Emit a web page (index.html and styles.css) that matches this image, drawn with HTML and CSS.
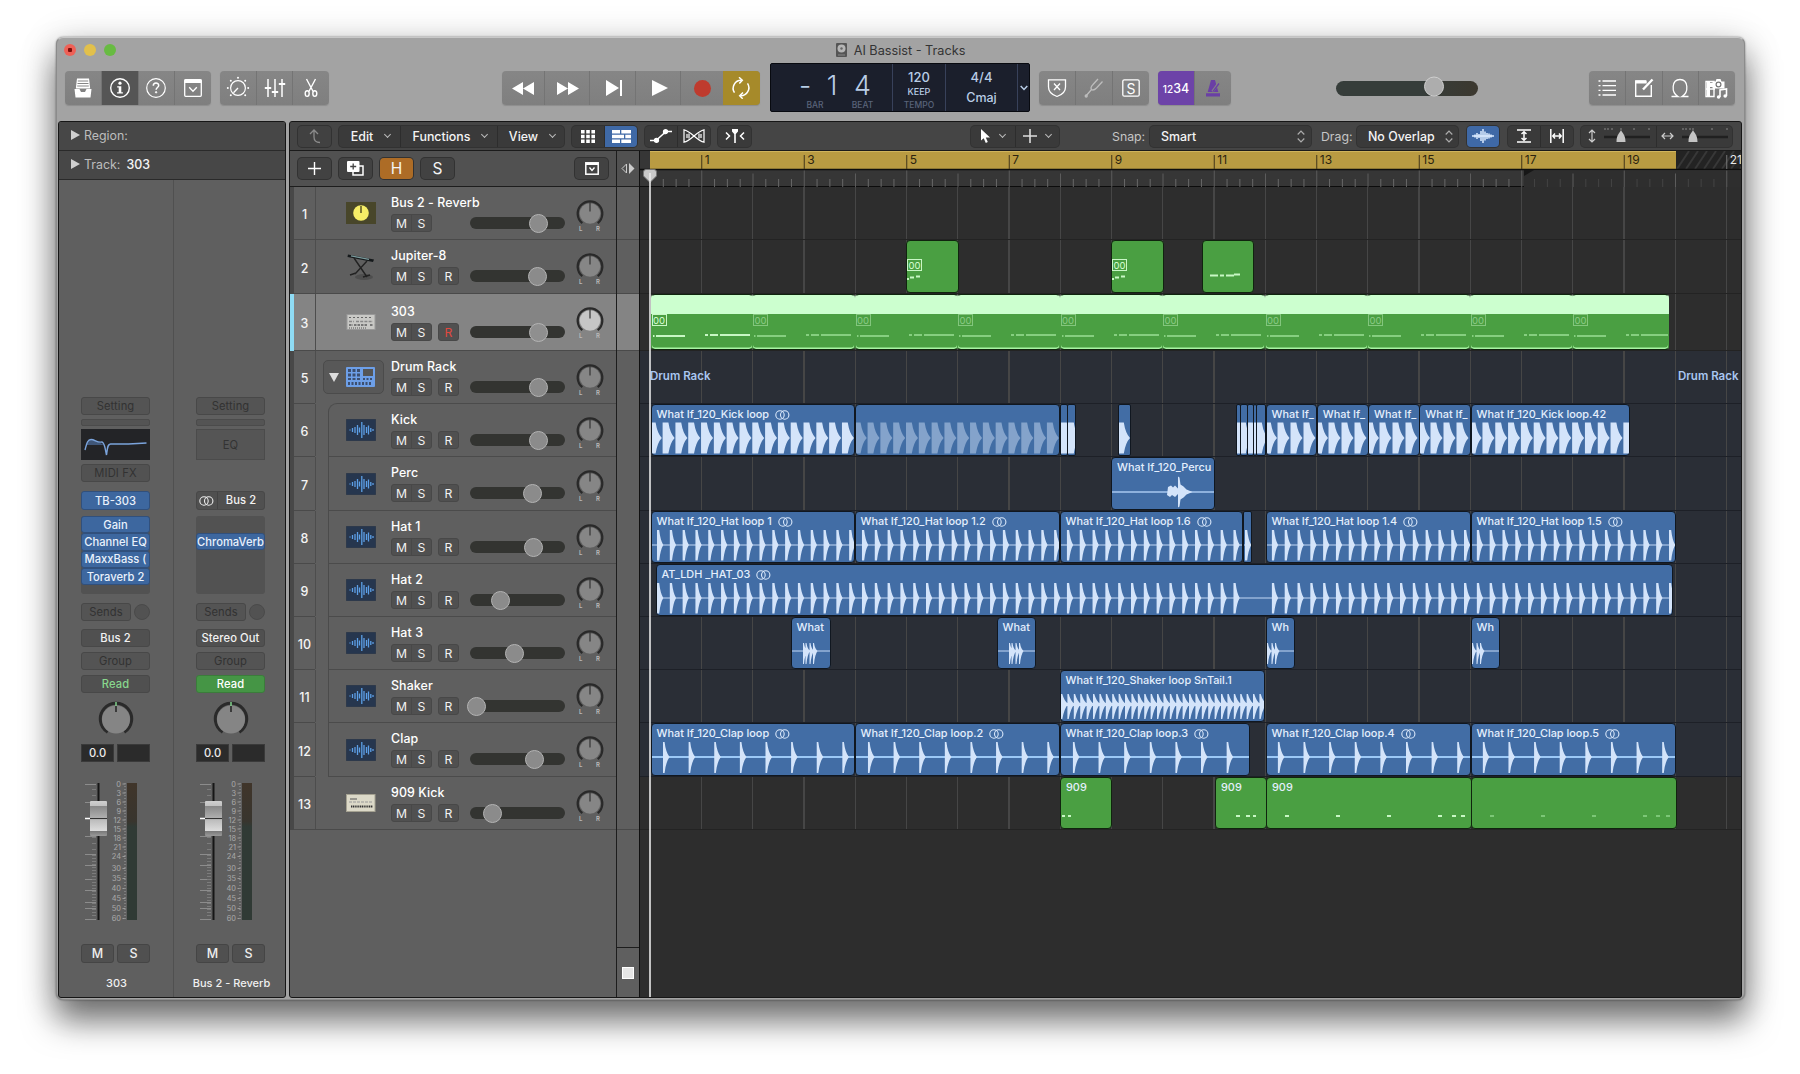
FILE: index.html
```html
<!DOCTYPE html>
<html lang="en">
<head>
<meta charset="utf-8">
<title>AI Bassist - Tracks</title>
<link rel="stylesheet" href="styles.css">
</head>
<body>
<div class="window">
  <header class="titlebar">
    <div class="lights"><i class="light close"></i><i class="light min"></i><i class="light max"></i></div>
    <div class="title">
      <svg width="11" height="14" viewBox="0 0 11 14"><rect width="11" height="14" rx="1" fill="#555"/><circle cx="5.5" cy="5.5" r="4" fill="#b5b5b5"/><circle cx="5.5" cy="5.5" r="1.2" fill="#666"/><path d="M2 12h7" stroke="#888"/></svg>
      <span>AI Bassist - Tracks</span>
    </div>
  </header>

  <div class="toolbar">
    <div class="group g-library">
      <span class="btn"><svg width="20" height="20" viewBox="0 0 20 20"><path d="M4 .5h12l1.200 10H2.800z" fill="#fff"/><path d="M4.800 3h10.400M4.500 5.500h11M4.200 8h11.600" stroke="#858585" stroke-width="1.100"/><path d="M1.500 11h5l1.500 3h4l1.500-3h5l-1 8.500h-15z" fill="#fff"/></svg></span>
      <span class="btn on"><svg width="22" height="22" viewBox="0 0 22 22"><circle cx="11" cy="11" r="9.300" fill="none" stroke="#fff" stroke-width="1.400"/><circle cx="11" cy="6.200" r="1.600" fill="#fff"/><path d="M8.200 9.200h4.100v6h1.600v1.300H8.100v-1.300h1.600v-4.700H8.200z" fill="#fff"/></svg></span>
      <span class="btn"><svg width="22" height="22" viewBox="0 0 22 22" fill="none" stroke="#fff"><circle cx="11" cy="11" r="9.300" stroke-width="1.200"/><path d="M8.300 8.700c0-3.600 5.400-3.500 5.400-.3 0 2-2.600 2.300-2.600 4.400" stroke-width="1.500"/><circle cx="11.100" cy="15.300" r=".7" fill="#fff"/></svg></span>
      <span class="btn"><svg width="20" height="20" viewBox="0 0 20 20" fill="none" stroke="#fff"><rect x="1.700" y="1.700" width="16.600" height="16.600" rx="1" stroke-width="1.300"/><path d="M1.500 1.500h17v3.600h-17z" fill="#fff" stroke="none"/><path d="M6.200 9.300l3.800 4 3.800-4" stroke-width="1.300"/></svg></span>
    </div>
    <div class="group g-edit">
      <span class="btn"><svg width="24" height="24" viewBox="0 0 24 24" fill="none" stroke="#fff"><circle cx="12" cy="12" r="7.400" stroke-width="1.200"/><path d="M12 12l-4.500 4.800" stroke-width="1.300"/><g fill="#fff" stroke="none"><circle cx="12" cy="1.800" r="1"/><circle cx="4.800" cy="4.800" r="1"/><circle cx="19.200" cy="4.800" r="1"/><circle cx="1.800" cy="12" r="1"/><circle cx="22.200" cy="12" r="1"/><circle cx="4.800" cy="19.200" r="1"/><circle cx="19.200" cy="19.200" r="1"/></g></svg></span>
      <span class="btn"><svg width="22" height="20" viewBox="0 0 22 20" stroke="#fff" stroke-width="1.500"><path d="M4 1v18M11 1v18M18 1v18"/><path d="M.8 10h6.400M7.800 14h6.400M14.800 6h6.400" stroke-width="2.200"/></svg></span>
      <span class="btn"><svg width="16" height="20" viewBox="0 0 16 20" fill="none" stroke="#fff" stroke-width="1.400"><path d="M3.500 1l6.600 12.500M12.500 1L5.900 13.500"/><ellipse cx="4.200" cy="15.600" rx="2" ry="2.800"/><ellipse cx="11.800" cy="15.600" rx="2" ry="2.800"/></svg></span>
    </div>
    <div class="group g-transport">
      <span class="btn"><svg width="22" height="13" viewBox="0 0 22 13" fill="#fff"><path d="M11 0v13L0 6.500zM22 0v13L11 6.500z"/></svg></span>
      <span class="btn nudge"><svg width="22" height="13" viewBox="0 0 22 13" fill="#fff"><path d="M0 0v13l11-6.500zM11 0v13l11-6.500z"/></svg></span>
      <span class="btn nudge"><svg width="16" height="16" viewBox="0 0 16 16" fill="#fff"><path d="M0 0v16l13-8zM14 0h2v16h-2z"/></svg></span>
      <span class="btn nudge"><svg width="16" height="16" viewBox="0 0 16 16" fill="#fff"><path d="M0 0v16l16-8z"/></svg></span>
      <span class="btn"><i class="rec"></i></span>
      <span class="btn cycle"><svg width="22" height="22" viewBox="0 0 22 22" fill="none" stroke="#fff" stroke-width="1.500"><path d="M4.500 15.700A8 8 0 0 1 11.500 3.300M17.500 6.300A8 8 0 0 1 10.500 18.700"/><path d="M9 .3l3.300 3-3 3.200M13 15.500l-3.300 3.200 3 3"/></svg></span>
    </div>
    <div class="lcd">
      <div class="lcd-pos"><b>-</b><b>1</b><b>4</b><small></small><small>BAR</small><small>BEAT</small></div>
      <div class="lcd-tempo"><b>120</b><em>KEEP</em><small>TEMPO</small></div>
      <div class="lcd-sig"><b>4/4</b><b>Cmaj</b></div>
      <div class="lcd-more"><svg width="8" height="6" viewBox="0 0 8 6" fill="none" stroke="#b9cde6" stroke-width="1.500"><path d="M.700 1L4 4.500 7.300 1"/></svg></div>
    </div>
    <div class="group g-mode">
      <span class="btn"><svg width="20" height="20" viewBox="0 0 20 20" fill="none" stroke="#fff" stroke-width="1.300"><path d="M1.500 1.800h17V9c0 5.500-4 8-8.500 9.500C5.500 17 1.500 14.500 1.500 9z"/><path d="M7 5.500l6 6.500M13 5.500L7 12"/></svg></span>
      <span class="btn"><svg width="20" height="20" viewBox="0 0 20 20" fill="none" stroke="#bdbdbd" stroke-width="1.300"><path d="M1.500 18.500l6-7M7.500 11.500c-1.500-2 0-3.500 1.500-5L14 1M7.500 11.500c2 1.500 3.500 0 5-1.500l6-6.500"/><circle cx="2.200" cy="18" r="1"/></svg></span>
      <span class="btn"><svg width="18" height="18" viewBox="0 0 18 18"><rect x=".8" y=".8" width="16.400" height="16.400" rx="1.500" fill="none" stroke="#fff" stroke-width="1.300"/></svg><span class="solo">S</span></span>
    </div>
    <div class="group g-count">
      <span class="btn purple"><sub>12</sub>34</span>
      <span class="btn"><svg width="16" height="18" viewBox="0 0 16 18"><path d="M6 1h4l3.300 12H2.700z" fill="#6a3fa5"/><path d="M1 14.300h14V17.500H1z" fill="#6a3fa5"/><path d="M7.500 12.500L14 3.500" stroke="#858585" stroke-width="2.500"/><path d="M8 12.500l6-8" stroke="#6a3fa5" stroke-width="1.300"/></svg></span>
    </div>
    <div class="volume"><i></i></div>
    <div class="group g-panels">
      <span class="btn"><svg width="18" height="16" viewBox="0 0 18 16" stroke="#fff" stroke-width="1.300"><path d="M4.500 1H18M4.500 5.600H18M4.500 10.300H18M4.500 15H18M.5 1h2M.5 5.600h2M.5 10.300h2M.5 15h2"/></svg></span>
      <span class="btn"><svg width="20" height="20" viewBox="0 0 20 20" fill="none" stroke="#fff"><path d="M12 3H1.700v15.300h15.600V7" stroke-width="1.400"/><path d="M1.700 4h11" stroke-width="3"/><path d="M9 11.500L18.500 1.500" stroke-width="2.400"/></svg></span>
      <span class="btn"><svg width="20" height="20" viewBox="0 0 20 20" fill="none" stroke="#fff" stroke-width="1.300"><path d="M1.500 18.500h6.500C1 14.500 1.500 1.500 10 1.500s9 13 2 17h6.500"/></svg></span>
      <span class="btn"><svg width="24" height="22" viewBox="0 0 24 22"><path d="M2 5h3v14H2zM5 6h4v4H5z" fill="#fff"/><path d="M1 4.500h8v15H1z" fill="none" stroke="#fff" stroke-width="1.400"/><path d="M1 12h9" stroke="#fff" stroke-width="1.400"/><path d="M7.500 4.500h3l1-2.500h4l1 2.500h3v7h-12z" fill="#fff"/><circle cx="13.500" cy="7.500" r="2.400" fill="#fff" stroke="#777" stroke-width="1.200"/><path d="M15 20v-7l6.500-1v7" fill="none" stroke="#fff" stroke-width="1.600"/><circle cx="13.600" cy="20" r="1.800" fill="#fff"/><circle cx="20.200" cy="19" r="1.800" fill="#fff"/></svg></span>
    </div>
  </div>

  <main class="panels">
    <aside class="inspector">
      <div class="insp-row"><i class="tri"></i>Region:</div>
      <div class="insp-row"><i class="tri"></i>Track: <b>303</b></div>
      <div class="strips" id="strips"></div>
    </aside>

    <section class="arrange">
      <div class="menubar">
        <div class="pill m-back"><span><svg width="12" height="15" viewBox="0 0 12 15" fill="none" stroke="#8b8b8b" stroke-width="1.300"><path d="M1 5l4-4 4 4M5 1v7c0 3.500 2 5.500 6 5.500"/></svg></span></div>
        <div class="pill m-menus"><span class="w1">Edit <i class="chev"></i></span><span class="w2">Functions <i class="chev"></i></span><span class="w3">View <i class="chev"></i></span></div>
        <div class="pill m-view"><span><svg width="14" height="13" viewBox="0 0 14 13" fill="#fff"><path d="M0 0h3.600v3.400H0zM5.200 0h3.600v3.400H5.200zM10.400 0H14v3.400h-3.600zM0 4.800h3.600v3.400H0zM5.200 4.800h3.600v3.400H5.200zM10.400 4.800H14v3.400h-3.600zM0 9.600h3.600V13H0zM5.200 9.600h3.600V13H5.200zM10.400 9.600H14V13h-3.600z"/></svg></span><span class="blue"><svg width="19" height="13" viewBox="0 0 19 13" fill="#fff"><path d="M0 0h8v3.400H0zM9.300 0H19v3.400H9.300zM0 4.800h12v3.400H0zM13.300 4.800H19v3.400h-5.700zM0 9.600h8V13H0zM9.300 9.600H19V13H9.300z"/></svg></span></div>
        <div class="pill m-auto"><span><svg width="22" height="14" viewBox="0 0 22 14" fill="none" stroke="#fff" stroke-width="1.500"><path d="M0 11.500h6L16 2.500h6"/><circle cx="6.500" cy="11.300" r="1.900" fill="#fff"/><circle cx="15.500" cy="2.700" r="1.900" fill="#fff"/></svg></span><span><svg width="22" height="14" viewBox="0 0 22 14" fill="none" stroke="#fff" stroke-width="1.200"><path d="M1 .800v12.400C8 12 14 2 21 .800v12.400C14 12 8 2 1 .800z"/><path d="M4 5v4M6 4.500v5M18 5v4M16 4.500v5"/></svg></span></div>
        <div class="pill m-catch"><span><svg width="20" height="14" viewBox="0 0 20 14" fill="none" stroke="#fff" stroke-width="1.500"><path d="M1 3.500L4.500 7 1 10.500M19 3.500L15.500 7l3.500 3.500"/><path d="M7 0h6v2.500L10.800 5v9H9.200V5L7 2.500z" fill="#fff" stroke="none"/></svg></span></div>
        <div class="pill m-tools"><span><svg width="10" height="14" viewBox="0 0 10 14" fill="#fff"><path d="M0 0v11.500l2.700-2.300L4.800 14l2-1-2-4.500H9z"/></svg><i class="chev"></i></span><span><svg width="14" height="14" viewBox="0 0 14 14" stroke="#ddd" stroke-width="1.600"><path d="M7 0v14M0 7h14"/></svg><i class="chev"></i></span></div>
        <label class="lb-snap">Snap:</label>
        <div class="pill m-snap"><span>Smart <svg width="8" height="13" viewBox="0 0 8 13" fill="none" stroke="#aaa" stroke-width="1.200"><path d="M.700 4.500L4 1l3.300 3.500M.700 8.500L4 12l3.300-3.500"/></svg></span></div>
        <label class="lb-drag">Drag:</label>
        <div class="pill m-drag"><span>No Overlap <svg width="8" height="13" viewBox="0 0 8 13" fill="none" stroke="#aaa" stroke-width="1.200"><path d="M.700 4.500L4 1l3.300 3.500M.700 8.500L4 12l3.300-3.500"/></svg></span></div>
        <div class="pill m-wave"><span class="blue"><svg width="22" height="14" viewBox="0 0 22 14" stroke="#dcebff" stroke-width="1.500"><path d="M0 7h22M3 5.500v3M5 4v6M7 5v4M9 2v10M11 0v14M13 2.500v9M15 4v6M17 4.500v5M19 5.500v3"/></svg></span></div>
        <div class="pill m-fit"><span><svg width="14" height="14" viewBox="0 0 14 14" fill="none" stroke="#fff" stroke-width="1.500"><path d="M0 1h14M0 13h14M7 3v8M4.500 5L7 2.800 9.500 5M4.500 9L7 11.200 9.500 9"/></svg></span><span><svg width="14" height="14" viewBox="0 0 14 14" fill="none" stroke="#fff" stroke-width="1.500"><path d="M.800 0v14M13.200 0v14M3 7h8M5 4.500L2.800 7 5 9.500M9 4.500L11.200 7 9 9.500"/></svg></span></div>
        <div class="pill m-zoom"><span><svg width="8" height="14" viewBox="0 0 8 14" fill="none" stroke="#ccc" stroke-width="1.200"><path d="M4 1v12M1 4l3-3 3 3M1 10l3 3 3-3"/></svg><svg width="46" height="16" viewBox="0 0 46 16"><path d="M0 9h46" stroke="#202020" stroke-width="2.500"/><path d="M1 0v2M4 0v2M8 0v2M17 0v2M30 0v2M45 0v2" stroke="#888"/><path d="M17 2c1 3 4.500 4 4.500 12h-9C12.500 6 16 5 17 2z" fill="#c4c4c4"/></svg></span><span><svg width="13" height="8" viewBox="0 0 13 8" fill="none" stroke="#ccc" stroke-width="1.200"><path d="M1 4h11M4 1L1 4l3 3M9 1l3 3-3 3"/></svg><svg width="46" height="16" viewBox="0 0 46 16"><path d="M0 9h46" stroke="#202020" stroke-width="2.500"/><path d="M1 0v2M4 0v2M8 0v2M11 0v2M30 0v2M45 0v2" stroke="#888"/><path d="M11 2c1 3 4.500 4 4.500 12h-9C6.500 6 10 5 11 2z" fill="#c4c4c4"/></svg></span></div>
      </div>

      <div class="work">
        <div class="headers">
          <div class="head-tools">
            <div class="pill"><span><svg width="13" height="13" viewBox="0 0 13 13" stroke="#fff" stroke-width="1.400"><path d="M6.500 0v13M0 6.500h13"/></svg></span></div>
            <div class="pill"><span><svg width="17" height="15" viewBox="0 0 17 15"><path d="M6 5h10v9H6z" fill="none" stroke="#fff" stroke-width="1.500"/><rect width="12.500" height="11" rx="1" fill="#fff"/><path d="M6.200 2.500v6M3.200 5.500h6" stroke="#444" stroke-width="1.300"/></svg></span></div>
            <div class="pill"><span class="orange">H</span></div>
            <div class="pill"><span class="big">S</span></div>
            <div class="pill last"><span><svg width="14" height="13" viewBox="0 0 14 13" fill="none" stroke="#fff"><rect x=".8" y=".8" width="12.400" height="11.400" stroke-width="1.500"/><path d="M1 2h12" stroke-width="2"/><path d="M4.500 5.500L7 8.500l2.500-3" stroke-width="1.300"/></svg></span></div>
            <div class="corner"><svg width="14" height="11" viewBox="0 0 14 11"><path d="M5.500 1v9L1 5.500z" fill="none" stroke="#ccc"/><path d="M8 0v11l5.500-5.500z" fill="#ccc"/></svg></div>
          </div>
          <div id="tracks"></div>
          <div class="head-rest"><div class="corner-col"><i></i></div></div>
        </div>
        <div class="timeline">
          <div class="ruler" id="ruler"></div>
          <div id="lanes"></div>
          <div class="playhead"><svg width="14" height="830" viewBox="0 0 14 830"><path d="M7 10v820" stroke="#f4f4f4" stroke-width="1.500"/><path d="M.5 3q0-2.500 2.500-2.500h8q2.500 0 2.500 2.500v4L7 13.500.5 7z" fill="#c9c9c9" stroke="#777"/><path d="M7 4v10" stroke="#fff"/></svg></div>
        </div>
      </div>
    </section>
  </main>
</div>
<script src="app.js"></script>
</body>
</html>
```
FILE: styles.css
```css
* { box-sizing: border-box; }
body { margin: 0; width: 1800px; height: 1074px; overflow: hidden; background: #fff; font-family: Inter, "Liberation Sans", sans-serif; font-size: 12px; color: #eee; padding: 37px 56px; }
svg { display: block; flex: none; }
b { font-weight: 500; }
i { font-style: normal; }
.window { width: 1689px; height: 963px; display: flex; flex-direction: column; background: #a3a3a3; border-radius: 7px; border: 1px solid #8b8b8b; border-top-color: #c8c8c8; box-shadow: 0 0 2px rgba(0,0,0,.5), 0 21px 33px rgba(0,0,0,.52), 0 4px 36px rgba(0,0,0,.18); }

/* title bar */
.titlebar { height: 25px; padding-bottom: 1px; display: grid; grid-template-columns: 264px 1fr 264px; align-items: center; }
.lights { display: flex; gap: 8px; padding-left: 7px; }
.light { width: 12px; height: 12px; border-radius: 50%; display: block; }
.close { background: radial-gradient(circle, #7c0d0a 0 2px, #ee6157 2.5px); }
.min { background: #e2c04b; }
.max { background: #68bb42; }
.title { display: flex; justify-content: center; align-items: center; gap: 7px; font-size: 12.7px; color: #343434; }

/* toolbar */
.toolbar { height: 58px; display: flex; align-items: flex-start; padding-left: 8px; }
.group { margin-top: 8px; height: 34px; display: flex; border-radius: 4px; background: linear-gradient(#868686, #7f7f7f); overflow: hidden; box-shadow: 0 1px 1px #8d8d8d; }
.btn { flex: 1; display: grid; place-items: center; border-left: 1px solid #747474; }
.btn > * { grid-area: 1 / 1; }
.btn:first-child { border-left: 0; }
.btn.on { background: #555; }
.btn.nudge { padding-left: 3px; }
.g-library { width: 146px; }
.g-edit { width: 109px; margin-left: 9px; }
.g-transport { width: 258px; margin-left: 173px; }
.g-transport .btn.cycle { background: #a68a2a; flex: 0 0 37px; border-left: 0; }
.rec { width: 17px; height: 17px; border-radius: 50%; background: #bf3b2e; }
.solo { font-size: 14px; color: #fff; }
.g-mode { width: 110px; margin-left: 9px; }
.g-count { width: 73px; margin-left: 9px; }
.btn.purple { display: flex; align-items: center; justify-content: center; background: #6d43a8; font-size: 12.5px; font-weight: 500; color: #fff; }
.purple sub { font-size: 10px; vertical-align: baseline; padding-top: 2px; }
.volume { width: 142px; height: 15px; margin: 18px 0 0 105px; border-radius: 8px; background: linear-gradient(90deg, #363d3a 60%, #3c382f); padding-left: 88px; }
.volume i { display: block; width: 20px; height: 20px; margin-top: -2.5px; border-radius: 50%; background: #adadad; border: 1px solid #cfcfcf; transform: translateY(-2.500px); }
.volume { display: flex; align-items: flex-start; }
.g-panels { width: 146px; margin-left: 111px; }
.lcd { width: 260px; height: 49px; margin-left: 10px; background: #1b1f2c; border: 1px solid #080a10; border-radius: 2px; display: flex; color: #b9cde6; }
.lcd small { font-size: 8.5px; color: #59637a; font-weight: 500; }
.lcd-pos { width: 121px; display: grid; grid-template-columns: 26px 28px 33px; grid-template-rows: 30px 12px; padding: 5px 0 0 21px; text-align: center; }
.lcd-pos b { font-size: 27px; font-weight: 300; line-height: 34px; }
.lcd-pos small { line-height: 13px; margin: 0 17px 0 -17px; }
.lcd-pos small:last-child { margin: 0; }
.lcd-tempo, .lcd-sig { border-left: 1px solid #38415a; text-align: center; display: flex; flex-direction: column; }
.lcd-tempo { width: 53px; padding-top: 5px; }
.lcd-sig { width: 72px; padding-top: 5px; }
.lcd-tempo b, .lcd-sig b { font-size: 13px; line-height: 17px; }
.lcd-sig b + b { margin-top: 3px; font-size: 12.5px; }
.lcd-tempo em { font-style: normal; font-size: 9px; line-height: 12px; font-weight: 500; }
.lcd-tempo small { line-height: 14px; }
.lcd-more { flex: 1; display: grid; place-items: center; border-left: 1px solid #38415a; }

/* panels */
.panels { height: 877px; margin: 0 2px 0 1px; display: flex; gap: 3px; }
.inspector { width: 228px; border: 1px solid #161616; border-radius: 3px; background: #5f5f5f; overflow: hidden; }
.insp-row { height: 29px; display: flex; align-items: center; gap: 6px; padding: 0 0 2px 12px; background: #474747; border-bottom: 1px solid #2a2a2a; color: #bdbdbd; font-size: 12.4px; }
.insp-row b { color: #f4f4f4; }
.tri { border-left: 9px solid #d0d0d0; border-top: 5.5px solid transparent; border-bottom: 5.5px solid transparent; margin-right: -2px; }
.strips { display: flex; height: 818px; }
.strip { width: 115px; padding: 217px 0 0 22px; border-right: 1px solid #505050; font-size: 11.2px; }
.strip:last-child { border: 0; }
.strip > * { width: 69px; }
.slot { height: 18px; border-radius: 3px; background: #545454; border: 1px solid #484848; display: flex; align-items: center; justify-content: center; color: #323232; white-space: nowrap; letter-spacing: .1px; }
.slot.lit { color: #f2f2f2; font-weight: 500; background: #505050; }
.slot.blue { background: #3d679f; border-color: #31507c; color: #e9f1fc; font-weight: 500; letter-spacing: 0; }
.slot.green { background: #459545; border-color: #3b7c3b; color: #fff; font-weight: 500; }
.slot.greentext { color: #88d78d; font-weight: 500; background: #505050; }
.thin { height: 7px; margin: 4px 0 3px; background: #545454; border: 1px solid #4b4b4b; border-radius: 2px; }
.eq { height: 31px; background: #232427; margin-bottom: 4px; }
.eq.off { background: #555; border: 1px solid #4b4b4b; color: #333; display: grid; place-items: center; }
.midifx { background: #525252; }
.midifx.none { visibility: hidden; }
.inst { margin-top: 9px; height: 19px; }
.bus-in { padding: 0; justify-content: flex-start; }
.bus-in svg { margin: 0 3px 0 2px; }
.bus-in span { flex: 1; text-align: center; border-left: 1px solid #444; line-height: 17px; }
.inserts { margin-top: 6px; height: 78px; background: #525252; border-radius: 3px; }
.inserts .slot { height: 17.3px; }
.inserts.pad { padding-top: 17px; }
.sends { margin-top: 9px; display: flex; gap: 3px; align-items: center; }
.sends .slot { flex: 1; }
.sends i { width: 16px; height: 16px; border-radius: 50%; background: #525252; border: 1px solid #4a4a4a; }
.out { margin-top: 8px; }
.grp { margin: 5px 0; }
.dial { height: 50px; display: flex; justify-content: center; padding-top: 8px; }
.readout { display: flex; gap: 3px; margin-top: 1px; }
.readout span { flex: 1; height: 18px; background: #2b2b2b; color: #eee; font-weight: 500; text-align: center; border: 1px solid #3a3a3a; line-height: 16px; }
.fader { margin: 16px 0 19px; height: 147px; }
.fader text { font-family: Inter, "Liberation Sans", sans-serif; font-size: 7.4px; fill: #aaa; text-anchor: end; }
.ms { display: flex; gap: 3px; }
.ms span { flex: 1; height: 19px; border-radius: 3px; background: #505050; border: 1px solid #454545; text-align: center; line-height: 18px; color: #eee; font-size: 12.5px; font-weight: 500; }
.strip > .sname { margin: 11px 0 0 -22px; width: 115px; text-align: center; line-height: 18px; color: #f0f0f0; font-weight: 500; font-size: 11px; }

/* arrange area */
.arrange { width: 1453px; border: 1px solid #161616; border-radius: 3px; overflow: hidden; background: #2d2d2d; display: flex; flex-direction: column; }
.menubar { height: 29px; flex: none; background: #454545; border-bottom: 1px solid #1b1b1b; display: flex; align-items: center; padding-left: 8px; }
.pill { height: 21px; display: flex; border-radius: 4px; background: #3a3a3a; box-shadow: 0 0 0 1px #323232; overflow: hidden; flex: none; }
.pill span { flex: 1; display: flex; align-items: center; justify-content: center; color: #f4f4f4; border-left: 1px solid #2d2d2d; white-space: nowrap; font-size: 12.4px; font-weight: 500; }
.pill span:first-child { border-left: 0; }
.pill .blue { background: #3f69a6; }
.chev { width: 5px; height: 5px; border: solid #bbb; border-width: 0 1.2px 1.2px 0; transform: rotate(45deg); margin: -3px 0 0 12px; }
.m-back { width: 33px; background: #414141; }
.m-menus { width: 225px; margin-left: 8px; }
.m-menus .w1 { flex: 0 0 61px; }
.m-menus .w2 { flex: 0 0 97px; }
.m-menus span { padding-left: 2px; }
.m-view { width: 65px; margin-left: 8px; }
.m-auto { width: 65px; margin-left: 8px; }
.m-catch { width: 33px; margin-left: 8px; }
.m-tools { width: 88px; margin-left: 220px; }
.m-tools .chev { margin-left: 9px; }
.menubar label { font-size: 12.3px; color: #c6c6c6; flex: none; }
.lb-snap { width: 38px; margin-left: 53px; }
.m-snap { width: 161px; }
.m-snap span { justify-content: space-between; padding: 0 6px 0 11px; }
.lb-drag { width: 36px; margin-left: 10px; }
.m-drag { width: 101px; }
.m-drag span { justify-content: space-between; padding: 0 5px 0 11px; }
.m-wave { width: 32px; margin-left: 9px; }
.m-fit { width: 65px; margin-left: 9px; }
.m-zoom { width: 151px; margin-left: 8px; }
.m-zoom span { gap: 8px; }
.work { flex: 1; display: flex; }
.headers { width: 350px; border-right: 1px solid #111; background: #5f5f5f; display: flex; flex-direction: column; }
.head-tools { height: 36px; background: #515151; border-bottom: 1px solid #1d1d1d; display: flex; align-items: center; gap: 8px; padding-left: 8px; }
.head-tools .pill { width: 33px; background: #424242; }
.head-tools .pill span { font-size: 15.5px; font-weight: 400; }
.pill .orange { background: #ad6c26; }
.head-tools .last { margin-left: auto; }
.corner { width: 23px; height: 36px; border-left: 1px solid #1d1d1d; display: grid; place-items: center; }
.track { display: flex; border-bottom: 1px solid #4a4a4a; }
.track .edge { width: 4px; background: #484848; margin-bottom: -1px; }
.track .num { width: 22px; border-right: 1px solid #4d4d4d; display: grid; place-items: center; font-size: 12.5px; font-weight: 500; color: #f4f4f4; padding-top: 3px; }
.track .tbody { flex: 1; display: flex; padding-left: 30px; }
.track .tbody.rack { padding-left: 7px; }
.track.child { border-bottom-color: transparent; background: linear-gradient(#4a4a4a, #4a4a4a) 0 100% / 25px 1px no-repeat; background-origin: border-box; }
.track.child .tbody { margin: 0 0 -1px 12px; padding-left: 17px; border-left: 1px solid #4b4b4b; border-bottom: 1px solid #4b4b4b; }
.track.first .tbody { border-top: 1px solid #4b4b4b; border-top-left-radius: 9px; margin-top: -1px; }
.track.prefirst { border-bottom-color: transparent; background: linear-gradient(#4a4a4a, #4a4a4a) 0 100% / 25px 1px no-repeat; background-origin: border-box; }
.track.selected { background: #848484; }
.track.selected .edge { background: #8fdcf5; }
.pic { width: 30px; display: flex; align-items: center; }
.rackbox { width: 61px; height: 34px; margin: 9px 0 0; display: flex; align-items: center; gap: 7px; padding-left: 5px; border-radius: 5px; background: #585858; border: 1px solid #4b4b4b; }
.down { border-top: 9px solid #ddd; border-left: 5.5px solid transparent; border-right: 5.5px solid transparent; }
.info { width: 174px; margin-left: 15px; padding-top: 7px; }
.rackbox + .info { margin-left: 7px; }
.tname { font-size: 12.4px; line-height: 18px; font-weight: 500; color: #fff; white-space: nowrap; letter-spacing: .1px; }
.controls { display: flex; align-items: center; height: 18px; margin-top: 2px; }
.mini { display: flex; width: 41px; height: 18px; border: 1px solid #484848; border-radius: 3px; background: #505050; overflow: hidden; }
.mini span { flex: 1; text-align: center; line-height: 17px; font-size: 12.2px; color: #f2f2f2; }
.mini span + span { border-left: 1px solid #484848; }
.mini.one { width: 21px; margin-left: 6px; }
.mini.red span { color: #e0493f; }
.hslider { width: 95px; height: 12px; margin-left: auto; border-radius: 6px; background: #333431; }
.hslider i { display: block; width: 19px; height: 19px; margin-top: -3.5px; border-radius: 50%; background: #8b8b8b; border: 1px solid #b4b4b4; }
.selected .hslider i { background: #8f8f8f; }
.pan { width: 28px; margin: 12px 11px 0 11px; }
.pan text { font-family: Inter, "Liberation Sans", sans-serif; font-size: 6px; fill: #bbb; font-weight: 600; }
.vline { width: 23px; border-left: 1px solid #1d1d1d; margin-bottom: -1px; }
.head-rest { flex: 1; display: flex; justify-content: flex-end; }
.corner-col { width: 23px; border-left: 1px solid #1d1d1d; display: flex; flex-direction: column; justify-content: flex-end; align-items: center; }
.corner-col::before { content: ""; margin-top: auto; margin-bottom: 19px; width: 100%; border-top: 1px solid #1d1d1d; }
.corner-col i { width: 12px; height: 12px; background: #e6e6e6; border: 1px solid #fff; margin-bottom: 18px; flex: none; }

/* timeline */
.timeline { flex: 1; position: relative; overflow: hidden; background: #2d2d2d; }
.ruler { height: 36px; background: #363636; border-bottom: 1px solid #0c0c0c; }
.ruler text { font-family: Inter, "Liberation Sans", sans-serif; font-size: 12px; fill: #2c2410; }
.ruler text.out { fill: #e6e6e6; }
.lane { position: relative; border-bottom: 1px solid #232323; background: repeating-linear-gradient(90deg, #464646 0 1px, transparent 1px 51.25px) 61px 0 no-repeat #2d2d2d; }
.lane.drum { background-color: #2a2e36; border-bottom-color: #1d2027; }
.playhead { position: absolute; left: 3px; top: 18px; }
.region { position: absolute; top: 0; bottom: 0; border-radius: 4px; border: 1px solid #101720; background: #426da5; overflow: hidden; }
.region.green { background: #4a9f42; border-color: #10240e; }
.region svg { position: absolute; left: 0; top: 0; }
.region .rn { position: absolute; left: 5px; top: 1px; display: flex; align-items: center; gap: 6px; font-size: 10.9px; line-height: 17px; font-weight: 500; color: #e4effd; white-space: nowrap; }
.region .rn svg { position: static; }
.region.tiny { border-radius: 2px; }
.region.sel { border-radius: 4px; border-color: #0f260d; background: linear-gradient(#ccffcf 0 19px, #4a9f42 19px); box-shadow: inset 0 -1.5px #a8f5a4; border-left-color: transparent; border-right-color: transparent; }
.loopbox { position: absolute; left: 0; width: 15px; height: 12px; font-size: 9.5px; line-height: 11px; border: 1px solid #c9f7c6; color: #d9ffd6; text-align: center; }
.ghost { opacity: .45; }
.racklabel { position: absolute; top: 17px; font-size: 11.5px; line-height: 17px; font-weight: 600; color: #a9c6f0; white-space: nowrap; }
```
FILE: app.js
```js
const FIRST = 640;      // window x of the timeline's left edge
const BAR0 = 650;       // window x of bar zero
const BAR = 51.25;
const px = n => +n.toFixed(2);

const STEREO = c => `<svg width="15" height="10" viewBox="0 0 15 10" fill="none" stroke="${c}" stroke-width="1.1"><circle cx="5" cy="5" r="4.2"/><circle cx="9.7" cy="5" r="4.2"/></svg>`;

const WAVE_PIC = `<svg width="30" height="22" viewBox="0 0 30 22"><rect width="30" height="22" rx="1" fill="#26364e" stroke="#343c48"/><path d="M4 10.5v1M6.500 9v4M9 8v6M11.500 6v10M13.500 8.500v5M15.800 3v16M18 6v10M20.500 8v6M22.500 6.500v9M24.800 9v4M27 10v2" stroke="#5c9fe6" stroke-width="1.3"/></svg>`;
const PICS = {
  wave: WAVE_PIC,
  knob: `<svg width="30" height="22" viewBox="0 0 30 22"><rect width="30" height="22" fill="#48462a"/><circle cx="15" cy="11" r="7.8" fill="#f6ee67"/><path d="M15 4v7" stroke="#3d3a1a" stroke-width="1.3"/></svg>`,
  keys: `<svg width="30" height="28" viewBox="0 0 30 28"><ellipse cx="18" cy="24" rx="9" ry="3" fill="#4e4e4e"/><path d="M2 1.500L28 6.500l-1 2.500L1.500 4z" fill="#15191b"/><path d="M5 2.800l18 3.600" stroke="#7b9a9c" stroke-width="1.2"/><path d="M8 5l13 19M21 8L9 21M4 22l6-2M17 24l7-2" stroke="#222" stroke-width="1.4" fill="none"/></svg>`,
  tb: `<svg width="30" height="16" viewBox="0 0 30 16"><rect x="1" y=".5" width="28" height="15" fill="#c9c9c6" stroke="#999"/><path d="M3 3.500h24" stroke="#666" stroke-dasharray="2 2"/><path d="M3 7.500h5M10 7.500h17" stroke="#888" stroke-width="1.500" stroke-dasharray="3 1.200"/><path d="M3 11h4M8 11h14M24 11h3" stroke="#777" stroke-width="2" stroke-dasharray="2.500 1"/><path d="M3 14h18" stroke="#555" stroke-dasharray="1 1"/></svg>`,
  rack: `<svg width="30" height="20" viewBox="0 0 30 20"><rect width="29" height="20" rx="1" fill="#6d9fe8"/><path d="M17 2h10v7H17z" fill="#555"/><g fill="#3c4f70"><path d="M2 2h3v3H2zM6.500 2h3v3h-3zM11 2h3v3h-3zM2 6.500h3v3H2zM6.500 6.500h3v3h-3zM11 6.500h3v3h-3zM2 11h3v2H2zM6.500 11h3v2h-3zM11 11h3v2h-3zM17 11h2v2h-2zM20.500 11h2v2h-2zM24 11h2v2h-2zM2 15h2v3H2zM5.500 15h2v3h-2zM9 15h2v3H9zM12.500 15h2v3h-2zM16 15h2v3h-2zM19.500 15h2v3h-2zM23 15h2v3h-2z"/></g></svg>`,
  tr: `<svg width="30" height="18" viewBox="0 0 30 18"><rect x=".5" y=".5" width="28.500" height="17" fill="#dcd9c8" stroke="#a5a292"/><path d="M4 5h7" stroke="#555"/><path d="M3 8h24" stroke="#999" stroke-dasharray="3 1"/><path d="M5 12.500h22" stroke="#333" stroke-width="1.800" stroke-dasharray="1.200 .6"/></svg>`
};

/* name, number, row height, picture, volume knob x, extra */
const tracks = [
  ["Bus 2 - Reverb", 1, 53, "knob", 539, { noRec: 1 }],
  ["Jupiter-8", 2, 54, "keys", 538.5, {}],
  ["303", 3, 57, "tb", 539, { sel: 1 }],
  ["Drum Rack", 5, 53, "rack", 539, { rack: 1, drum: 1, cls: "prefirst" }],
  ["Kick", 6, 53, "wave", 539, { drum: 1, cls: "child first" }],
  ["Perc", 7, 54, "wave", 533, { drum: 1, cls: "child" }],
  ["Hat 1", 8, 53, "wave", 534.5, { drum: 1, cls: "child" }],
  ["Hat 2", 9, 53, "wave", 501, { drum: 1, cls: "child" }],
  ["Hat 3", 10, 53, "wave", 515, { drum: 1, cls: "child" }],
  ["Shaker", 11, 53, "wave", 477, { drum: 1, cls: "child" }],
  ["Clap", 12, 54, "wave", 535, { drum: 1, cls: "child" }],
  ["909 Kick", 13, 53, "tr", 493, {}]
];

const pan = sel => `<svg class="pan" width="28" height="34" viewBox="0 0 28 34"><path d="M6.300 24.200A12.300 12.300 0 1 1 21.700 24.200" fill="none" stroke="#292929" stroke-width="2.3"/><circle cx="14" cy="14.5" r="10.3" fill="${sel ? "#c6c6c6" : "#868686"}"/><path d="M14 3v9.500" stroke="#333" stroke-width="1.2"/><text x="3" y="32">L</text><text x="20" y="32">R</text></svg>`;

document.getElementById("tracks").innerHTML = tracks.map(([name, num, h, pic, vol, o]) => `
  <div class="track ${o.cls || ""} ${o.sel ? "selected" : ""}" style="height:${h}px">
    <div class="edge"></div><div class="num">${num}</div>
    <div class="tbody ${o.rack ? "rack" : ""}">
      ${o.rack ? `<div class="rackbox"><i class="down"></i>${PICS.rack}</div>` : `<div class="pic">${PICS[pic]}</div>`}
      <div class="info" ${o.sel ? 'style="padding-top:9px"' : ""}>
        <div class="tname">${name}</div>
        <div class="controls"><div class="mini"><span>M</span><span>S</span></div>${o.noRec ? "" : `<div class="mini one ${o.sel ? "red" : ""}"><span>R</span></div>`}
        <div class="hslider"><i style="margin-left:${vol - 471 - 9.5}px"></i></div></div>
      </div>
      ${pan(o.sel)}
    </div>
    <div class="vline"></div>
  </div>`).join("");

/* ---- waveforms ---- */
const C = 33;
function pulse(kind, p) {
  const f = (w, mid, end, up, dn) =>
    `M${px(p)} ${C - up}h${w}Q${px(p + mid)} ${C - up * .3} ${px(p + end)} ${C}Q${px(p + mid)} ${C + dn * .3} ${px(p + w)} ${C + dn}H${px(p)}z`;
  if (kind === "kick") return f(5.8, 7.5, 12, 15.5, 15.5);
  if (kind === "hat") return f(2.2, 3.4, 6.3, 15, 15.5);
  if (kind === "clap") return f(1.6, 2.8, 6.6, 15, 16);
  if (kind === "shaker") return f(1.3, 3.2, 7.2, 10, 15);
  return f(1, 1.8, 4.5, 8, 13);
}
const PERIOD = { kick: 12.81, hat: 12.81, clap: 25.62, shaker: 6.4 };
const START = { kick: 648.8, hat: 656, clap: 662, shaker: 1060 };
function wave(kind, x, w, opt) {
  let d = "";
  if (opt.at) opt.at.forEach(p => d += pulse(kind, p - x));
  else for (let p = START[kind]; p < x + w; p += PERIOD[kind])
    if (p > x - PERIOD[kind] && !(opt.gap && p > opt.gap[0] && p < opt.gap[1])) d += pulse(kind, p - x);
  const line = kind === "clap"
    ? `<path d="M0 ${C}H${w}" stroke="#9cc9f7" stroke-width="2"/>`
    : `<path d="M0 ${C}H${w}" stroke="#c3d9f5" stroke-width="1"/>`;
  return `<svg width="${w}" height="51" ${opt.ghost ? 'class="ghost"' : ""}>${kind === "kick" ? "" : line}<path d="${d}" fill="#d4e4fa"/></svg>`;
}
const audio = (kind, a, b, name, o = {}) => {
  const w = px(b - a);
  return `<div class="region ${w < 20 ? "tiny" : ""}" style="left:${px(a - FIRST - .5)}px;width:${w}px">${o.raw || wave(kind, a, w, o)}${name ? `<div class="rn">${name}${o.st ? STEREO("#dbe9fb") : ""}</div>` : ""}</div>`;
};
const dash = list => list.map(([x, y, w, c]) => `<path d="M${x} ${y}h${w}" stroke="${c || "#c8f7c4"}" stroke-width="2"/>`).join("");
const midi = (a, b, name, notes, top) =>
  `<div class="region green" style="left:${px(a - FIRST)}px;width:${px(b - a)}px"><svg width="${px(b - a)}" height="51">${dash(notes)}</svg>${name ? `<div class="rn">${name}</div>` : ""}${top ? `<div class="loopbox" style="top:${top}px">00</div>` : ""}</div>`;

const S = { st: 1 };
const lanes = {
  2: midi(906, 958.5, "", [[0, 38, 2], [3, 36.5, 4], [9, 35.5, 4]], 18) + midi(1111, 1164, "", [[0, 38, 2], [3, 36.5, 4], [9, 35.5, 4]], 18) +
     midi(1201.5, 1253.5, "", [[7, 34.5, 8], [17, 34.5, 4], [23, 34.5, 8], [31, 33.5, 6]]),
  5: `<div class="racklabel" style="left:10px">Drum Rack</div><div class="racklabel" style="left:1038px">Drum Rack</div>`,
  6: audio("kick", 651, 855.5, "What If_120_Kick loop", S) + audio("kick", 855, 1060.5, "", { ghost: 1 }) +
     audio("kick", 1060, 1068, "", { at: [1060] }) + audio("kick", 1067, 1076, "", { at: [1067] }) + audio("kick", 1118, 1131, "", { at: [1117] }) +
     [[1236.5, 1241], [1240, 1248], [1247, 1254], [1253, 1257], [1256, 1266]].map(([a, b]) => audio("kick", a, b, "", { at: [a - 1] })).join("") +
     [0, 1, 2, 3].map(i => audio("kick", 1266 + i * BAR, 1266.5 + (i + 1) * BAR, "What If_", { at: [-2, 10.5, 23.5, 36.5].map(p => 1266 + i * BAR + p) })).join("") +
     audio("kick", 1471, 1630, "What If_120_Kick loop.42"),
  7: audio("x", 1111.5, 1215.5, "What If_120_Percu", { raw: `<svg width="104" height="51"><path d="M0 34H104" stroke="#a9c8f0" stroke-width="1.5"/><path d="M56 29l3-1.500 2 2 2-2 3 3v-12l1.500 1 1 7 3 2 3 3 6 2.500-6 2.500-3 3-3 2-1 7-1.500 1V36l-3 3-3-2-2 2-3-2z" fill="#d4e4fa"/></svg>` }),
  8: audio("hat", 651, 855.5, "What If_120_Hat loop 1", S) + audio("hat", 855, 1060.5, "What If_120_Hat loop 1.2", S) + audio("hat", 1060, 1243, "What If_120_Hat loop 1.6", S) +
     audio("hat", 1243, 1252.5, "", { at: [1244] }) + audio("hat", 1266, 1471.5, "What If_120_Hat loop 1.4", S) + audio("hat", 1471, 1676.5, "What If_120_Hat loop 1.5", S),
  9: audio("hat", 656, 1673, "AT_LDH _HAT_03", { st: 1, gap: [1238, 1268] }),
  10: audio("h3", 791, 831, "What", { at: [802, 804.5, 808.5, 812] }) + audio("h3", 997, 1036, "What", { at: [1008, 1010.5, 1014.5, 1018] }) +
      audio("h3", 1266, 1295, "Wh", { at: [1266, 1270.5, 1274] }) + audio("h3", 1471, 1500.5, "Wh", { at: [1471, 1475.5, 1479] }),
  11: audio("shaker", 1060, 1265.5, "What If_120_Shaker loop SnTail.1"),
  12: audio("clap", 651, 855.5, "What If_120_Clap loop", S) + audio("clap", 855, 1060.5, "What If_120_Clap loop.2", S) + audio("clap", 1060, 1250.5, "What If_120_Clap loop.3", S) +
      audio("clap", 1266, 1471.5, "What If_120_Clap loop.4", S) + audio("clap", 1471, 1676.5, "What If_120_Clap loop.5", S),
  13: midi(1060, 1112, "909", [[1, 38, 3], [7, 38, 3]]) + midi(1215, 1266.5, "909", [[20, 38, 4], [30, 38, 4], [37, 38, 3]]) +
      midi(1266, 1471.5, "909", [[18, 38, 4], [69, 38, 4], [120, 38, 4], [171, 38, 4], [185, 38, 4], [194, 38, 4]]) +
      midi(1471, 1676.5, "", [18, 69, 120, 171, 184, 194].map(x => [x, 38, 4, "#7cc777"]))
};
let loops = "";
for (let i = 0; i < 10; i++) {
  const a = i ? BAR0 + i * 102.5 : 651, b = i === 9 ? 1669.5 : BAR0 + (i + 1) * 102.5 + .5;
  const c = i ? "#86cf80" : "#c8f7c4";
  loops += `<div class="region sel" style="left:${px(a - FIRST - .5)}px;width:${px(b - a)}px"><svg width="103" height="54">${dash([[1, 41, 1.5, c], [4, 41, 29, c], [53, 40, 3, c], [58, 40, 8, c], [68, 40, 30, c]])}</svg><div class="loopbox ${i ? "ghost" : ""}" style="top:19px">00</div></div>`;
}
lanes[3] = loops;

document.getElementById("lanes").innerHTML = tracks.map(([, num, h, , , o]) =>
  `<div class="lane ${o.drum ? "drum" : ""}" style="height:${h}px">${lanes[num] || ""}</div>`).join("");

/* ---- ruler ---- */
let r = `<rect x="10" y="0" width="1026" height="18" fill="#b99b42"/><rect x="1036" y="0" width="66" height="18" fill="#232323"/>`;
for (let x = 1037; x < 1102; x += 9) r += `<path d="M${x} 18l12-18" stroke="#383838" stroke-width="2"/>`;
r += `<path d="M10 .5H1036" stroke="#d0b45c"/><path d="M0 18.5H1102" stroke="#0e0e0e" stroke-width="1.5"/><rect x="884" y="19.5" width="218" height="17" fill="#2e2e2e"/><path d="M884 19h10l-10 6z" fill="#171717"/>`;
for (let i = 1; i <= 84; i++) {
  const x = px(BAR0 - FIRST + i * BAR / 4 + .5);
  const dim = i >= 68 ? "#444" : "#686868";
  const top = i % 8 === 4 ? 19.5 : i % 4 === 0 ? 22.5 : 28;
  r += `<path d="M${x} ${top}V36" stroke="${i % 4 ? dim : "#5c5c5c"}"/>`;
  if (i % 8 === 4) r += `<path d="M${x} 4V18" stroke="${i < 82 ? "#40351a" : "#777"}"/><text class="${i > 82 ? "out" : ""}" x="${x + 3}" y="12.5">${i / 4}</text>`;
}
document.getElementById("ruler").innerHTML = `<svg width="1102" height="36">${r}</svg>`;

/* ---- channel strips ---- */
const marks = [[0, 1], [3, 10], [6, 19], [9, 28], [12, 37], [15, 46], [18, 55], [21, 64], [24, 73.5], [30, 85.5], [35, 95.5], [40, 105.5], [45, 115.5], [50, 125.5], [60, 135.5]];
const fader = () => {
  let s = "";
  [1, 19, 35, 53, 71, 82, 96, 107, 119, 125, 136].forEach(y => s += `<path d="M4 ${y + .5}h11" stroke="#8c8c8c"/>`);
  for (let y = 6; y < 134; y += y < 70 ? 6 : 3) s += `<path d="M11 ${y + .5}h4" stroke="#7c7c7c"/>`;
  marks.forEach(([n, y]) => s += `<text x="40" y="${y + 2.7}">${n}</text><path d="M41.5 ${y}h3" stroke="#9a9a9a"/>`);
  s += `<path d="M44 0V137" stroke="#8a8a8a" stroke-width="1.5" stroke-dasharray="1 2"/>`;
  return `<svg class="fader" width="69" height="147" viewBox="0 -5 69 147"><defs><linearGradient id="m" x2="0" y2="1"><stop offset="0" stop-color="#40352a"/><stop offset=".28" stop-color="#38352e"/><stop offset=".32" stop-color="#303a35"/><stop offset="1" stop-color="#303a35"/></linearGradient><linearGradient id="k" x2="0" y2="1"><stop offset="0" stop-color="#cfcfcf"/><stop offset=".14" stop-color="#c2c2c2"/><stop offset=".15" stop-color="#888"/><stop offset=".49" stop-color="#b0b0b0"/><stop offset=".5" stop-color="#333"/><stop offset=".53" stop-color="#bbb"/><stop offset=".86" stop-color="#ddd"/><stop offset=".87" stop-color="#7b7b7b"/><stop offset="1" stop-color="#999"/></linearGradient></defs>${s}<rect x="46" y="0" width="10" height="137" fill="url(#m)"/><path d="M17.5 0V137" stroke="#161616" stroke-width="2"/><path d="M4 35.5h5" stroke="#fff" stroke-width="1.3"/><rect x="9" y="18" width="17" height="35" rx="1" fill="url(#k)"/></svg>`;
};
const dial = `<div class="dial"><svg width="36" height="36" viewBox="0 0 36 36"><path d="M9.700 31.200A15.700 15.700 0 1 1 26.300 31.200" fill="none" stroke="#2a2a2a" stroke-width="3"/><circle cx="18" cy="18.5" r="14" fill="#858585"/><path d="M18 5v6" stroke="#222" stroke-width="1.5"/><path d="M18 1v4" stroke="#7fd08a" stroke-width="1.5"/></svg></div>`;
const tail = (out, read, name) => `
  <div class="sends"><div class="slot">Sends</div><i></i></div>
  <div class="slot lit out">${out}</div><div class="slot grp">Group</div><div class="slot ${read}">Read</div>
  ${dial}<div class="readout"><span>0.0</span><span></span></div>${fader()}
  <div class="ms"><span>M</span><span>S</span></div><div class="sname">${name}</div>`;
document.getElementById("strips").innerHTML = `
  <div class="strip"><div class="slot">Setting</div><div class="thin"></div>
    <div class="eq"><svg width="69" height="31"><path d="M4 20C6 14 7 10 10 10s8 3 13 6l1 0H6z" fill="#3f5678"/><path d="M4 21C6 13 7 10.5 10 10.5c4 0 6 3.500 11 2.500 3 1 3.500 9 4.500 13 1-7 1-11 4-11h18l18-1" fill="none" stroke="#7ba4dc" stroke-width="1.4"/></svg></div>
    <div class="slot midifx">MIDI FX</div><div class="slot blue inst">TB-303</div>
    <div class="inserts"><div class="slot blue">Gain</div><div class="slot blue">Channel EQ</div><div class="slot blue">MaxxBass (</div><div class="slot blue">Toraverb 2</div></div>
    ${tail("Bus 2", "greentext", "303")}</div>
  <div class="strip"><div class="slot">Setting</div><div class="thin"></div>
    <div class="eq off">EQ</div><div class="slot midifx none"></div>
    <div class="slot lit inst bus-in">${STEREO("#eee")}<span>Bus 2</span></div>
    <div class="inserts pad"><div class="slot blue">ChromaVerb</div></div>
    ${tail("Stereo Out", "green", "Bus 2 - Reverb")}</div>`;
```
